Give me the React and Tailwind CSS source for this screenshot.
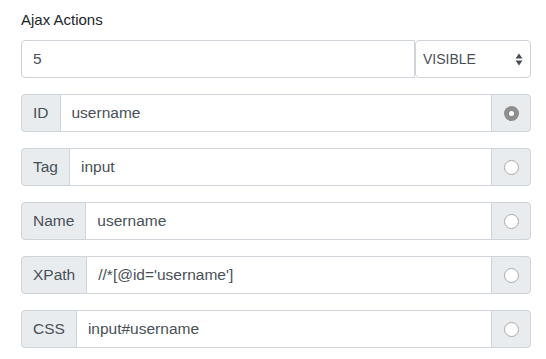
import React from "react";

const rows = [
  { label: "ID", value: "username", checked: true },
  { label: "Tag", value: "input" },
  { label: "Name", value: "username" },
  { label: "XPath", value: "//*[@id='username']" },
  { label: "CSS", value: "input#username" },
];

function Radio({ checked }) {
  if (checked) {
    return (
      <span className="flex h-[15px] w-[15px] items-center justify-center rounded-full bg-[#8e8e8e]">
        <span className="h-[5px] w-[5px] rounded-full bg-white" />
      </span>
    );
  }
  return <span className="h-[15px] w-[15px] rounded-full border border-[#a9a9a9] bg-white" />;
}

export default function App() {
  return (
    <div
      className="w-[546px] h-[359px] bg-white pl-[21px] pr-[15px] pt-[9px] text-[#495057]"
      style={{ fontFamily: '"Liberation Sans", Arial, sans-serif' }}
    >
      <div className="h-[22px] text-[15px] leading-[22px] text-[#212529]">Ajax Actions</div>
      <div className="mt-[9px] flex h-[38px]">
        <div className="flex flex-1 items-center rounded-l-[4px] border border-[#ced4da] px-[11px] text-[15.5px]">5</div>
        <div className="relative flex w-[116px] items-center rounded-[4px] border border-[#ced4da] pl-[7px] text-[14px]">
          VISIBLE
          <svg className="absolute right-[7px] top-[12px]" width="8" height="13" viewBox="0 0 8 13">
            <path d="M4 0.5 L7.5 5.5 L0.5 5.5 Z" fill="#4a4f55" />
            <path d="M4 12.5 L7.5 7.5 L0.5 7.5 Z" fill="#4a4f55" />
          </svg>
        </div>
      </div>
      <div className="mt-[16px] flex flex-col gap-[16px]">
        {rows.map((r) => (
          <div key={r.label} className="flex h-[38px] text-[15.5px]">
            <div className="flex items-center rounded-l-[4px] border border-[#ced4da] bg-[#e9ecef] px-[11px]">
              {r.label}
            </div>
            <div className="flex flex-1 items-center border-y border-[#ced4da] px-[11px]">{r.value}</div>
            <div className="flex w-[40px] items-center justify-center rounded-r-[4px] border border-[#ced4da] bg-[#e9ecef]">
              <Radio checked={r.checked} />
            </div>
          </div>
        ))}
      </div>
    </div>
  );
}
